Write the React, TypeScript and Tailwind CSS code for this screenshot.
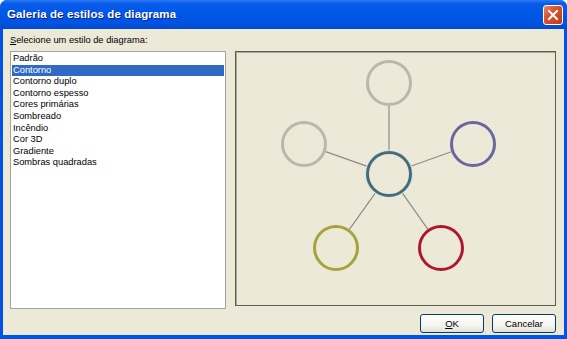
import React from 'react';

const styles = ['Padrão', 'Contorno', 'Contorno duplo', 'Contorno espesso', 'Cores primárias', 'Sombreado', 'Incêndio', 'Cor 3D', 'Gradiente', 'Sombras quadradas'];

const center = { x: 389, y: 174 };
const nodes = [
  { x: 389, y: 83, color: '#B9B6AE' },
  { x: 304, y: 144, color: '#B9B6AE' },
  { x: 473, y: 144, color: '#6A669E' },
  { x: 336, y: 248, color: '#A7A23B' },
  { x: 441, y: 248, color: '#AE172D' },
];
const R = 21.5;

function Diagram() {
  return (
    <svg className="block w-full h-full" viewBox="236 52 319 253">
      {nodes.map((n, i) => {
        const dx = n.x - center.x;
        const dy = n.y - center.y;
        const d = Math.hypot(dx, dy);
        const ux = dx / d;
        const uy = dy / d;
        return (
          <line
            key={'l' + i}
            x1={center.x + ux * (R + 1.5)}
            y1={center.y + uy * (R + 1.5)}
            x2={n.x - ux * (R + 1.5)}
            y2={n.y - uy * (R + 1.5)}
            stroke="#8E8C88"
            strokeWidth={1.2}
          />
        );
      })}
      {nodes.map((n, i) => (
        <circle key={'c' + i} cx={n.x} cy={n.y} r={R} fill="none" stroke={n.color} strokeWidth={3} />
      ))}
      <circle cx={center.x} cy={center.y} r={R + 1.8} fill="none" stroke="#CFE6EA" strokeWidth={1.2} />
      <circle cx={center.x} cy={center.y} r={R} fill="none" stroke="#466C7A" strokeWidth={3} />
    </svg>
  );
}

function XpButton({ children }: { children: React.ReactNode }) {
  return (
    <button
      type="button"
      className="w-[64px] h-[19px] rounded-[3px] border border-[#003C74] bg-[linear-gradient(to_bottom,#FFFFFF_0%,#F5F4EF_60%,#E3E1D6_100%)] text-[9.5px] text-black flex items-center justify-center leading-none"
    >
      {children}
    </button>
  );
}

export default function App() {
  return (
    <div className="w-[567px] h-[339px] flex flex-col bg-[#0054E3] rounded-t-[7px] overflow-hidden font-['Liberation_Sans',Arial,sans-serif]">
      <div className="h-[29px] shrink-0 flex items-center justify-between pl-[7px] pr-[4px] bg-[linear-gradient(to_bottom,#2C7AF2_0%,#0A5CEB_12%,#0058E8_40%,#0053E1_80%,#0049D0_100%)]">
        <span className="text-white font-bold text-[11.5px] tracking-[0.1px] [text-shadow:1px_1px_0_#0A1E8A]">
          Galeria de estilos de diagrama
        </span>
        <div className="w-[20px] h-[20px] rounded-[3px] border border-white bg-[linear-gradient(135deg,#E8886A_0%,#D9532F_40%,#C23A14_100%)] flex items-center justify-center">
          <svg width="12" height="12" viewBox="0 0 12 12">
            <path d="M2 2 L10 10 M10 2 L2 10" stroke="#FFFFFF" strokeWidth="2" strokeLinecap="square" />
          </svg>
        </div>
      </div>
      <div className="flex-1 mx-[3px] mb-[4px] bg-[#ECE9D8] flex flex-col pt-[4px] pb-[2px] text-black">
        <div className="h-[14px] pl-[7px] text-[9.3px] leading-[14px]">
          <span className="underline">S</span>elecione um estilo de diagrama:
        </div>
        <div className="mt-[4px] flex items-start gap-[9px] pl-[7px]">
          <div className="w-[216px] h-[258px] border border-[#A5A5A0] bg-white p-[1px]">
            {styles.map((s, i) => (
              <div
                key={s}
                className={
                  i === 1
                    ? 'leading-[11.6px] h-[11.6px] text-[9.3px] px-[1px] bg-[#316AC5] text-white'
                    : 'leading-[11.6px] h-[11.6px] text-[9.3px] px-[1px]'
                }
              >
                {s}
              </div>
            ))}
          </div>
          <div className="w-[321px] h-[255px] border border-[#5E5C52] shadow-[inset_1px_1px_0_#ACA899]">
            <Diagram />
          </div>
        </div>
        <div className="mt-[5px] flex justify-end gap-[8px] pr-[8px]">
          <XpButton>
            <span className="underline">O</span>K
          </XpButton>
          <XpButton>Cancelar</XpButton>
        </div>
      </div>
    </div>
  );
}
